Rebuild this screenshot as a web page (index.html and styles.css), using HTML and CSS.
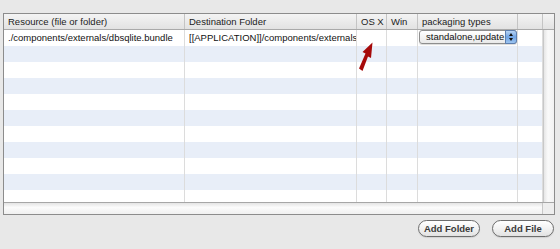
FILE: index.html
```html
<!DOCTYPE html>
<html>
<head>
<meta charset="utf-8">
<link rel="stylesheet" href="styles.css">
</head>
<body>
    <div class="painel">
        <div class="quadro">
            <div class="cabecalho linha">
                <div class="cel">Resource (file or folder)</div>
                <div class="cel">Destination Folder</div>
                <div class="cel">OS X</div>
                <div class="cel">Win</div>
                <div class="cel">packaging types</div>
                <div class="cel"></div>
                <div class="cel canto"></div>
            </div>
            <div class="corpo">
                <div id="linhas" class="linhas"></div>
                <div class="rolagem-v"></div>
            </div>
            <div class="rolagem-h"><div class="trilho"></div><div class="canto-inf"></div></div>
        </div>
        <svg class="seta" width="20" height="32" viewBox="0 0 20 32">
            <polygon points="2,28.5 5.5,31 11,16.5 14,18 15.5,2.5 5.5,12 8.5,13.5" fill="#a60a0a"/>
        </svg>
        <div class="botoes">
            <a class="btn">Add Folder</a>
            <a class="btn">Add File</a>
        </div>
    </div>
<script type="text/javascript">
var linhas = document.getElementById('linhas');
var html = '';
for (var i = 0; i < 11; i++) {
    var par = i % 2 ? ' listra' : '';
    if (i === 0) {
        html += '<div class="linha' + par + '">' +
            '<div class="cel">./components/externals/dbsqlite.bundle</div>' +
            '<div class="cel">[[APPLICATION]]/components/externals/dbsqlite.bundle</div>' +
            '<div class="cel"></div><div class="cel"></div>' +
            '<div class="cel"><span class="popup">standalone,update<span class="passo"></span></span></div>' +
            '<div class="cel"></div></div>';
    } else {
        html += '<div class="linha' + par + '"><div class="cel"></div><div class="cel"></div><div class="cel"></div><div class="cel"></div><div class="cel"></div><div class="cel"></div></div>';
    }
}
linhas.innerHTML = html;
</script>
</body>
</html>
```

FILE: styles.css
```css
body { margin: 0; background: #e8e8e8; font-family: "Liberation Sans", Arial, sans-serif; font-size: 9.5px; color: #111; }
.painel { position: relative; padding: 13px 5px 0 3px; height: 236px; }
.quadro { border: 1px solid #8c8c8c; background: #fff; width: 550px; }
.linha { display: grid; grid-template-columns: 181px 172px 30px 31px 100px 25px; height: 16px; }
.cabecalho { grid-template-columns: 181px 172px 30px 31px 100px 25px 11px; height: 15px; background: linear-gradient(#f4f4f4, #e2e2e2); border-bottom: 1px solid #a9a9a9; }
.cabecalho .cel { border-right: 1px solid #c4c4c4; padding-left: 4px; line-height: 15px; color: #222; }
.cabecalho .canto { border-right: none; }
.cel { border-right: 1px solid #dcdcdc; overflow: hidden; white-space: nowrap; padding-left: 4px; line-height: 16px; }
.listra { background: #e8eef8; }
.corpo { display: flex; height: 172px; overflow: hidden; }
.linhas { width: 539px; }
.rolagem-v { width: 11px; background: linear-gradient(90deg, #e6e6e6, #fafafa 40%, #f2f2f2); border-left: 1px solid #c8c8c8; }
.rolagem-h { display: flex; height: 11px; border-top: 1px solid #a6a6a6; }
.trilho { flex: 1; background: linear-gradient(#e4e4e4, #fbfbfb 40%, #f0f0f0); }
.canto-inf { width: 11px; background: #eeeeee; border-left: 1px solid #c8c8c8; }
.popup {
    position: relative;
    display: block;
    margin: 0 0 0 -3px;
    height: 12px;
    line-height: 12px;
    padding-left: 6px;
    border: 1px solid #8e8e8e;
    border-radius: 3px;
    background: linear-gradient(#ffffff, #e9e9e9);
    box-shadow: 0 1px 1px rgba(0,0,0,.15);
}
.passo {
    position: absolute;
    right: -1px;
    top: -1px;
    width: 12px;
    height: 14px;
    border-radius: 0 3px 3px 0;
    background: linear-gradient(#b8d4f4, #6fa3e4 50%, #9cc4f0);
    border: 1px solid #5d7fb0;
    box-sizing: border-box;
}
.passo:before, .passo:after {
    content: "";
    position: absolute;
    left: 3px;
    border-left: 2.5px solid transparent;
    border-right: 2.5px solid transparent;
}
.passo:before { top: 2px; border-bottom: 3px solid #111; }
.passo:after { bottom: 2px; border-top: 3px solid #111; }
.seta { position: absolute; left: 357px; top: 40px; }
.botoes { display: flex; justify-content: flex-end; gap: 12px; margin-top: 5px; padding-right: 1px; }
.btn {
    display: block;
    width: 60px;
    height: 15px;
    line-height: 15px;
    text-align: center;
    border: 1px solid #6d6d6d;
    border-radius: 9px;
    background: linear-gradient(#ffffff, #f2f2f2 50%, #e2e2e2);
    font-weight: bold;
    color: #3a3a3a;
    font-size: 9.5px;
    box-shadow: 0 1px 1px rgba(0,0,0,.1);
    cursor: pointer;
}
```
